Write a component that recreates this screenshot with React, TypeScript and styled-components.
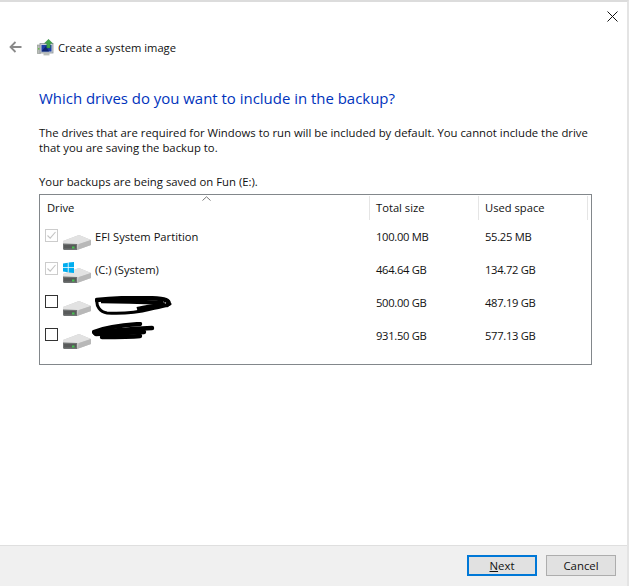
import React from "react";
import styled, { createGlobalStyle } from "styled-components";

const Global = createGlobalStyle`
  html, body { margin: 0; padding: 0; background: #fff; }
  body { font-family: "Open Sans", "Noto Sans", "Liberation Sans", sans-serif; color: #000; }
`;

const Win = styled.div`
  width: 629px; height: 586px; box-sizing: border-box;
  border-top: 2px solid #dcdcdc; border-right: 2px solid #e4e4e4;
  display: flex; flex-direction: column; overflow: hidden; background: #fff;
`;
const CloseRow = styled.div`
  height: 30px; display: flex; justify-content: flex-end; align-items: flex-start;
  padding: 9px 9px 0 0; box-sizing: border-box;
`;
const NavRow = styled.div`
  height: 30px; display: flex; align-items: center; padding-left: 9px;
`;
const NavTitle = styled.span`
  font-size: 11.2px; margin-left: 4px; color: #111;
`;
const IconSlot = styled.span`
  display: flex; margin-left: 15px;
`;
const Content = styled.div`
  flex: 1; padding: 25px 35px 0 39px; display: flex; flex-direction: column;
`;
const Heading = styled.h1`
  margin: 0; font-size: 14.95px; line-height: 22px; font-weight: 400; color: #0033bc;
`;
const Para = styled.p`
  margin: 16px 0 0; font-size: 11.33px; line-height: 15px; color: #111; width: 556px;
`;
const SaveNote = styled.p`
  margin: 19px 0 0; font-size: 11.33px; line-height: 15px; color: #111;
`;
const Table = styled.div`
  margin-top: 5px; width: 553px; height: 171px; box-sizing: border-box;
  border: 1px solid #82878b; display: flex; flex-direction: column; position: relative;
`;
const HeaderRow = styled.div`
  display: grid; grid-template-columns: 330px 109px 109px; height: 26px; padding-top: 1px; box-sizing: border-box;
`;
const HeaderCell = styled.div<{ $pad: number }>`
  font-size: 11.2px; height: 24px; line-height: 23px; color: #111; padding-left: ${(p) => p.$pad}px;
  box-sizing: border-box; border-right: 1px solid #e5e5e5;
`;
const SortCaret = styled.svg`
  position: absolute; left: 162px; top: 1px;
`;
const Body = styled.div`
  display: flex; flex-direction: column;
`;
const Row = styled.div`
  display: grid; grid-template-columns: 330px 109px 109px; height: 33px; align-items: center;
`;
const NameCell = styled.div`
  display: flex; align-items: center; height: 100%; padding-left: 5px; box-sizing: border-box;
`;
const Box = styled.span<{ $off?: boolean }>`
  width: 13px; height: 13px; box-sizing: border-box; flex: none; display: block;
  border: 1px solid ${(p) => (p.$off ? "#cccccc" : "#333333")};
  background: #fff; margin-top: -4px;
`;
const DriveSlot = styled.span`
  flex: none; width: 28px; height: 26px; margin-left: 5px; display: block;
`;
const Name = styled.span`
  font-size: 11.2px; color: #111; margin-left: 4px; margin-top: -3px; white-space: nowrap;
`;
const Cell = styled.div<{ $pad: number }>`
  font-size: 11.2px; letter-spacing: -0.3px; color: #111; padding-left: ${(p) => p.$pad}px; margin-top: -3px;
`;
const Scribble = styled.svg<{ $left: number; $shift: number }>`
  flex: none; margin-left: ${(p) => p.$left}px;
  margin-top: ${(p) => Math.max(p.$shift * 2, 0)}px;
  margin-bottom: ${(p) => Math.max(-p.$shift * 2, 0)}px;
`;
const Footer = styled.div`
  height: 41px; flex: none; box-sizing: border-box; background: #f0f0f0; border-top: 1px solid #dfdfdf;
  display: flex; justify-content: flex-end; align-items: flex-start; gap: 9px; padding: 9px 11px 0 0;
`;
const Btn = styled.button<{ $primary?: boolean }>`
  width: 70px; height: 21px; box-sizing: border-box; padding: 0; margin: 0;
  background: #e1e1e1; border: ${(p) => (p.$primary ? "2px solid #0078d7" : "1px solid #adadad")};
  font-family: inherit; font-size: 11.4px; line-height: 17px; color: #111;
`;
const Under = styled.span` text-decoration: underline; `;

const Check = () => (
  <svg width="11" height="11" viewBox="0 0 11 11" style={{ display: "block" }}>
    <path d="M1.5 5.5 L4.2 8.2 L9.5 2" fill="none" stroke="#c4c4c4" strokeWidth="1.1" />
  </svg>
);

const Drive = ({ win }: { win?: boolean }) => (
  <DriveSlot>
    <svg width="28" height="26" viewBox="0 0 28 26" style={{ display: "block" }}>
      <path d="M0 16 L16 10 L28 15 L28 20 L14 25 L1 25 L0 24 Z" fill="#c9c9c9" />
      <path d="M0 16 L16 10 L28 15 L16 19 L0 19 Z" fill="#e2e2e2" />
      <path d="M16 19 L28 15 L28 20 L14 25 Z" fill="#b8b8b8" />
      <path d="M0 18.5 L14 19 L14 25 L1 25 L0 24 Z" fill="#6f7272" />
      <rect x="1" y="20" width="12" height="3.5" fill="#585a5a" />
      <rect x="9" y="21.5" width="2.5" height="2" fill="#45c24f" />
      {win && (
        <g fill="#00adef">
          <path d="M0 5.4 L4.8 4.8 L4.8 9.2 L0 9.2 Z" />
          <path d="M5.6 4.6 L11 4 L11 9.2 L5.6 9.2 Z" />
          <path d="M0 10 L4.8 10 L4.8 14.2 L0 13.6 Z" />
          <path d="M5.6 10 L11 10 L11 15 L5.6 14.4 Z" />
        </g>
      )}
    </svg>
  </DriveSlot>
);

const rows = [
  { name: "EFI System Partition", total: "100.00 MB", used: "55.25 MB", off: true },
  { name: "(C:) (System)", total: "464.64 GB", used: "134.72 GB", off: true, win: true },
  { scrib: 1, total: "500.00 GB", used: "487.19 GB" },
  { scrib: 2, total: "931.50 GB", used: "577.13 GB" },
];

export default function App() {
  return (
    <>
      <Global />
      <Win>
        <CloseRow>
          <svg width="11" height="11" viewBox="0 0 11 11">
            <path d="M0.5 0.5 L10.5 10.5 M10.5 0.5 L0.5 10.5" stroke="#111" strokeWidth="1" fill="none" />
          </svg>
        </CloseRow>
        <NavRow>
          <svg width="13" height="12" viewBox="0 0 13 12">
            <path d="M12.5 6 L1.5 6 M6.5 1 L1.5 6 L6.5 11" stroke="#8a8a8a" strokeWidth="1.8" fill="none" />
          </svg>
          <IconSlot>
            <svg width="17" height="17" viewBox="0 0 17 17">
              <rect x="0.5" y="6" width="3" height="8.5" fill="#b9bdb9" stroke="#8b918b" strokeWidth="0.6" />
              <rect x="1" y="9" width="1.6" height="1.6" fill="#6bc04b" />
              <rect x="3" y="4.5" width="13" height="9.5" fill="#c8cfd4" stroke="#8d9499" strokeWidth="0.8" />
              <rect x="4.5" y="6" width="10" height="6.5" fill="#1c3fa8" />
              <path d="M4.5 12.5 L9 7 L12 12.5 Z" fill="#0d2670" />
              <rect x="6.5" y="14" width="6" height="2.4" fill="#b9bdb9" />
              <path d="M11.5 0.3 L15.5 4.3 L13.2 4.3 L13.2 9 L9.8 9 L9.8 4.3 L7.5 4.3 Z" fill="#3fa64a" stroke="#1f7a2c" strokeWidth="0.4" />
            </svg>
          </IconSlot>
          <NavTitle>Create a system image</NavTitle>
        </NavRow>
        <Content>
          <Heading>Which drives do you want to include in the backup?</Heading>
          <Para>
            The drives that are required for Windows to run will be included by default. You cannot include the drive that you are saving the backup to.
          </Para>
          <SaveNote>Your backups are being saved on Fun (E:).</SaveNote>
          <Table>
            <SortCaret width="9" height="5" viewBox="0 0 9 5">
              <path d="M0.5 4.5 L4.5 0.8 L8.5 4.5" fill="none" stroke="#777" strokeWidth="1" />
            </SortCaret>
            <HeaderRow>
              <HeaderCell $pad={7}>Drive</HeaderCell>
              <HeaderCell $pad={6}>Total size</HeaderCell>
              <HeaderCell $pad={6}>Used space</HeaderCell>
            </HeaderRow>
            <Body>
              {rows.map((r, i) => (
                <Row key={i}>
                  <NameCell>
                    <Box $off={r.off}>{r.off && <Check />}</Box>
                    <Drive win={r.win} />
                    {r.name && <Name>{r.name}</Name>}
                    {r.scrib === 1 && (
                      <Scribble $left={4} $shift={2} width="77" height="20" viewBox="0 0 77 20">
                        <path d="M2 4 C20 2 50 1 66 3 C74 4 75 7 72 9" stroke="#000" strokeWidth="4.5" fill="none" strokeLinecap="round" />
                        <path d="M2 4 C1 10 5 16 12 17 C28 18 44 16 56 13 C64 11 70 11 75 8" stroke="#000" strokeWidth="3" fill="none" strokeLinecap="round" />
                        <path d="M6 5 C24 5 50 6 68 7" stroke="#000" strokeWidth="4.5" fill="none" />
                        <path d="M42 13 C50 11 60 10 70 8" stroke="#000" strokeWidth="4" fill="none" />
                      </Scribble>
                    )}
                    {r.scrib === 2 && (
                      <Scribble $left={1} $shift={-5} width="63" height="20" viewBox="0 0 63 20">
                        <path d="M2 10 C12 6 30 3 48 2" stroke="#000" strokeWidth="4.4" fill="none" strokeLinecap="round" />
                        <path d="M3 11 C20 8 40 7 60 6" stroke="#000" strokeWidth="4.4" fill="none" strokeLinecap="round" />
                        <path d="M4 12 C20 11 40 11 52 10" stroke="#000" strokeWidth="4.4" fill="none" strokeLinecap="round" />
                        <path d="M10 15 C24 15 38 15 48 14" stroke="#000" strokeWidth="4.4" fill="none" strokeLinecap="round" />
                      </Scribble>
                    )}
                  </NameCell>
                  <Cell $pad={6}>{r.total}</Cell>
                  <Cell $pad={6}>{r.used}</Cell>
                </Row>
              ))}
            </Body>
          </Table>
        </Content>
        <Footer>
          <Btn $primary><Under>N</Under>ext</Btn>
          <Btn>Cancel</Btn>
        </Footer>
      </Win>
    </>
  );
}
